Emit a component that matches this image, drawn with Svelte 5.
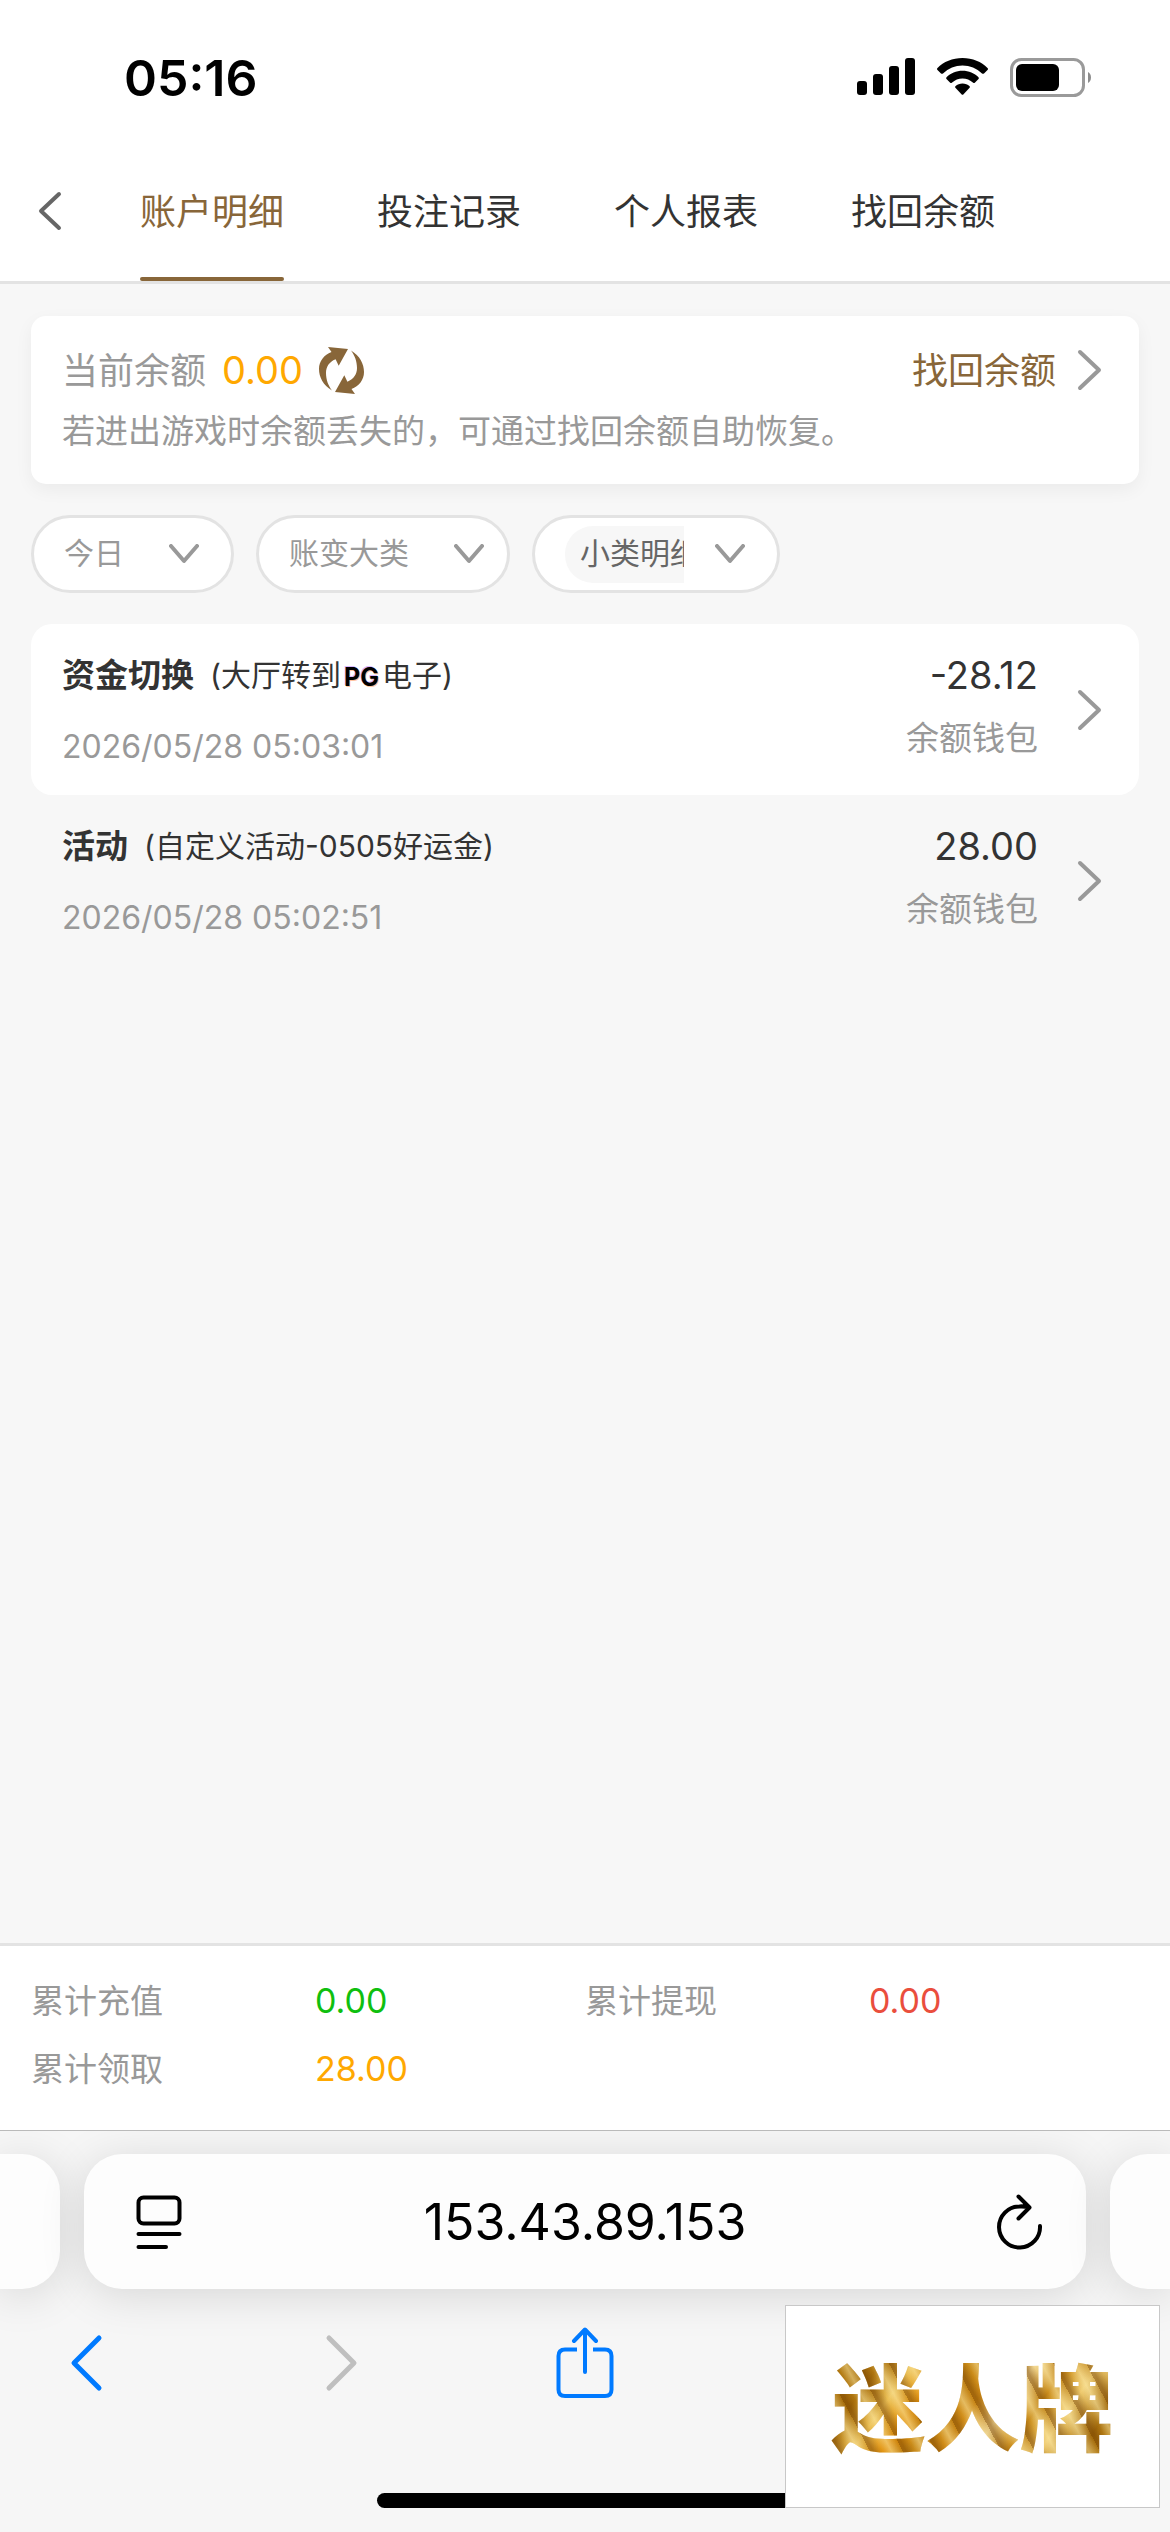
<script lang="ts">
	const tabs = ['账户明细', '投注记录', '个人报表', '找回余额'];
	let activeTab = $state('账户明细');

	const records = [
		{
			type: '资金切换',
			before: '(大厅转到',
			brand: 'PG',
			after: '电子)',
			time: '2026/05/28 05:03:01',
			amount: '-28.12',
			wallet: '余额钱包'
		},
		{
			type: '活动',
			before: '(自定义活动-0505好运金)',
			brand: '',
			after: '',
			time: '2026/05/28 05:02:51',
			amount: '28.00',
			wallet: '余额钱包'
		}
	];

	const totals = [
		{ label: '累计充值', value: '0.00', tone: 'green' },
		{ label: '累计提现', value: '0.00', tone: 'red' },
		{ label: '累计领取', value: '28.00', tone: 'orange' }
	];
</script>

{#snippet arrowRight()}
	<svg class="arrow" width="28" height="42" viewBox="0 0 28 42" aria-hidden="true">
		<path d="M4 3 L23 21 L4 39" />
	</svg>
{/snippet}

{#snippet arrowDown()}
	<svg class="arrow" width="30" height="20" viewBox="0 0 30 20" aria-hidden="true">
		<path d="M2 2 L15 17 L28 2" />
	</svg>
{/snippet}

<div class="screen">
	<div class="status">
		<span class="clock">05:16</span>
		<div class="status-icons">
			<svg width="58" height="38" viewBox="0 0 58 38" aria-hidden="true">
				<rect x="0" y="23" width="10" height="14" rx="3" />
				<rect x="16" y="16" width="10" height="21" rx="3" />
				<rect x="32" y="8" width="10" height="29" rx="3" />
				<rect x="48" y="0" width="10" height="37" rx="3" />
			</svg>
			<svg width="51" height="38" viewBox="0 0 51 38" aria-hidden="true">
				<path d="M25.500 0 C35.500 0 44.500 3.800 50.500 10 Q51.500 11 50.500 12 L47 15.500 Q46 16 45 15.500 C39.500 10.300 33 7.500 25.500 7.500 C18 7.500 11.500 10.300 6 15.500 Q5 16 4 15.500 L0.500 12 Q-0.500 11 0.500 10 C6.500 3.800 15.500 0 25.500 0 Z" />
				<path d="M25.500 12.800 C31.800 12.800 37.500 15.200 41.500 19.300 Q42.300 20.200 41.500 21 L37.800 24.700 Q37 25.200 36.200 24.700 C33 22 29.500 20.500 25.500 20.500 C21.500 20.500 18 22 14.800 24.700 Q14 25.200 13.200 24.700 L9.500 21 Q8.700 20.200 9.500 19.300 C13.500 15.200 19.200 12.800 25.500 12.800 Z" />
				<path d="M25.500 25.500 C28.300 25.500 30.700 26.500 32.600 28.200 Q33.300 29 32.600 29.800 L26.300 36.500 Q25.500 37.200 24.700 36.500 L18.400 29.800 Q17.700 29 18.400 28.200 C20.300 26.500 22.700 25.500 25.500 25.500 Z" />
			</svg>
			<svg width="82" height="39" viewBox="0 0 82 39" aria-hidden="true">
				<rect x="1.500" y="1.500" width="72" height="36" rx="10" fill="none" stroke="#9a9a9a" stroke-width="3" />
				<rect x="6" y="6" width="43" height="27" rx="6" />
				<path d="M78 14 C82 16 82 23 78 25 Z" fill="#8c8c8c" />
			</svg>
		</div>
	</div>

	<header>
		<button class="back" aria-label="返回">
			<svg width="26" height="40" viewBox="0 0 26 40" aria-hidden="true">
				<path d="M23 3 L5 20 L23 37" />
			</svg>
		</button>
		<nav class="tabs">
			{#each tabs as tab}
				<button class:active={tab === activeTab} onclick={() => (activeTab = tab)}>{tab}</button>
			{/each}
		</nav>
	</header>

	<main>
		<section class="balance">
			<div class="balance-row">
				<span class="muted">当前余额</span>
				<span class="money">0.00</span>
				<button class="refresh" aria-label="刷新">
					<svg width="45" height="47" viewBox="0 0 45 47" aria-hidden="true">
						<path id="half" d="M13 43.500 C4 38 0 30 0 22 C0 14 5 8 12.500 5 L9 0 L29 2 L19.700 18.700 L16.600 12.300 C10 15 7 20 7 26 C7 33 9.500 39 13 43.500 Z" />
						<use href="#half" transform="rotate(180 22.500 23.500)" />
					</svg>
				</button>
				<a class="recover" href="#recover">
					<span>找回余额</span>
					{@render arrowRight()}
				</a>
			</div>
			<p>若进出游戏时余额丢失的，可通过找回余额自助恢复。</p>
		</section>

		<div class="filters">
			<div class="pill day">
				<select aria-label="日期"><option>今日</option></select>
				{@render arrowDown()}
			</div>
			<div class="pill kind">
				<select aria-label="账变大类"><option>账变大类</option></select>
				{@render arrowDown()}
			</div>
			<div class="pill detail">
				<select aria-label="小类明细"><option>小类明细</option></select>
				{@render arrowDown()}
			</div>
		</div>

		<ul class="records">
			{#each records as record}
				<li>
					<div class="info">
						<div class="title">
							<strong>{record.type}</strong>
							<span>{record.before}{#if record.brand}<b class="brand">{record.brand}</b>{/if}{record.after}</span>
						</div>
						<time>{record.time}</time>
					</div>
					<div class="sum">
						<span class="amount">{record.amount}</span>
						<span class="wallet">{record.wallet}</span>
					</div>
					{@render arrowRight()}
				</li>
			{/each}
		</ul>
	</main>

	<dl class="totals">
		{#each totals as item}
			<div>
				<dt>{item.label}</dt>
				<dd class={item.tone}>{item.value}</dd>
			</div>
		{/each}
	</dl>

	<footer class="browser">
		<div class="address-row">
			<div class="bar side-left"></div>
			<div class="bar address">
				<button aria-label="页面菜单">
					<svg width="46" height="54" viewBox="0 0 46 54" aria-hidden="true">
						<rect x="2.500" y="2.500" width="41" height="26" rx="5" />
						<path d="M2.500 39 H43.500 M2.500 52 H30" />
					</svg>
				</button>
				<span>153.43.89.153</span>
				<button aria-label="重新载入">
					<svg width="46" height="56" viewBox="0 0 46 56" aria-hidden="true">
						<path d="M43 32 A20.500 20.500 0 1 1 22.500 12.500 Q27 12 32 13.500 M21.500 2.500 L32.500 13.500 L21.500 24.500" />
					</svg>
				</button>
			</div>
			<div class="bar side-right"></div>
		</div>
		<nav class="toolbar">
			<button aria-label="后退">
				<svg width="60" height="72" viewBox="0 0 60 72" aria-hidden="true">
					<path d="M43 11 L18 36 L43 61" stroke-width="5" />
				</svg>
			</button>
			<button aria-label="前进" disabled>
				<svg width="60" height="72" viewBox="0 0 60 72" aria-hidden="true">
					<path d="M23 11 L48 36 L23 61" stroke-width="5" />
				</svg>
			</button>
			<button aria-label="分享">
				<svg width="60" height="72" viewBox="0 0 60 72" aria-hidden="true">
					<path d="M22 22.500 H10 Q3.500 22.500 3.500 29 V62.500 Q3.500 69 10 69 H50 Q56.500 69 56.500 62.500 V29 Q56.500 22.500 50 22.500 H38" stroke-linecap="butt" />
					<path d="M30 45 V3 M19 14 L30 2.500 L41 14" />
				</svg>
			</button>
		</nav>
		<div class="home"></div>
		<div class="sticker"><span>迷人牌</span></div>
	</footer>
</div>

<style>
	:global(body) {
		margin: 0;
		background: #f7f7f7;
	}

	.screen {
		display: flex;
		flex-direction: column;
		min-height: 100vh;
		color: #333;
		font-family: Inter, 'Noto Sans CJK SC', sans-serif;
		font-size: 33px;
	}

	button {
		display: flex;
		align-items: center;
		justify-content: center;
		padding: 0;
		border: 0;
		background: none;
		color: inherit;
		font: inherit;
	}

	svg {
		display: block;
		flex: none;
	}

	/* status bar */
	.status {
		display: flex;
		align-items: flex-start;
		justify-content: space-between;
		height: 141px;
		padding: 48px 78px 0 124px;
		box-sizing: border-box;
		background: #fff;
		color: #000;
	}

	.clock {
		font-size: 50px;
		font-weight: 600;
		line-height: 60px;
	}

	.status-icons {
		display: flex;
		gap: 22px;
		padding-top: 10px;
	}

	/* tabs */
	header {
		display: flex;
		height: 140px;
		border-bottom: 3px solid #e3e3e3;
		background: #fff;
	}

	.back {
		justify-content: flex-start;
		width: 140px;
		padding-left: 36px;
	}

	.back path {
		fill: none;
		stroke: #666;
		stroke-width: 4;
		stroke-linecap: round;
		stroke-linejoin: round;
	}

	.tabs {
		display: flex;
		gap: 93px;
	}

	.tabs button {
		position: relative;
		padding-bottom: 5px;
		font-size: 36px;
		white-space: nowrap;
	}

	.tabs .active {
		color: #886639;
	}

	.tabs .active::after {
		content: '';
		position: absolute;
		right: 0;
		bottom: 0;
		left: 0;
		height: 4px;
		border-radius: 2px;
		background: #886639;
	}

	main {
		flex: 1;
		padding: 32px 31px;
	}

	.arrow path {
		fill: none;
		stroke: #999;
		stroke-width: 4;
		stroke-linecap: round;
		stroke-linejoin: round;
	}

	/* balance card */
	.balance {
		padding: 24px 35px 29px 31px;
		border-radius: 15px;
		background: #fff;
		box-shadow: 0 6px 18px rgba(0, 0, 0, 0.05);
	}

	.balance-row {
		display: flex;
		align-items: center;
		height: 60px;
		font-size: 36px;
	}

	.muted,
	.recover span {
		padding-bottom: 4px;
	}

	.muted {
		color: #999;
	}

	.money {
		margin: 0 16px;
		color: #ffa800;
		font-size: 38px;
	}

	.refresh svg {
		fill: #886639;
	}

	.recover {
		display: flex;
		align-items: center;
		gap: 20px;
		margin-left: auto;
		color: #886639;
		text-decoration: none;
	}

	.balance p {
		margin: 7px 0 0;
		color: #999;
		line-height: 48px;
	}

	/* filters */
	.filters {
		display: flex;
		gap: 22px;
		margin: 31px 0;
	}

	.pill {
		display: flex;
		align-items: center;
		height: 72px;
		padding: 0 32px 0 30px;
		border: 3px solid #e3e3e3;
		border-radius: 39px;
		background: #fff;
	}

	.pill select {
		height: 57px;
		padding: 0 0 2px;
		border: 0;
		background: none;
		appearance: none;
		color: #999;
		font: inherit;
		font-size: 30px;
	}

	.day select {
		width: 105px;
	}

	.kind {
		padding-right: 23px;
	}

	.kind select {
		width: 165px;
	}

	.detail {
		gap: 31px;
	}

	.pill.detail select {
		width: 119px;
		padding-left: 15px;
		border-radius: 28px 0 0 28px;
		background: #f7f7f7;
		color: #666;
	}

	/* records */
	.records {
		margin: 0;
		padding: 0;
		list-style: none;
	}

	.records li {
		display: flex;
		align-items: center;
		height: 171px;
		padding: 0 35px 0 31px;
		border-radius: 21px;
	}

	.records li:nth-child(odd) {
		background: #fff;
	}

	.info,
	.sum {
		display: flex;
		flex-direction: column;
	}

	.info {
		flex: 1;
		gap: 26px;
	}

	.title {
		display: flex;
		align-items: center;
		gap: 16px;
		height: 48px;
	}

	.title span {
		font-size: 30px;
	}

	.brand {
		margin: 0 3px;
		color: #000;
		font-size: 25px;
		font-weight: 700;
		text-shadow:
			-1px -1px #d9b8ff,
			1px 1px #ffc4a0;
	}

	time {
		color: #999;
		font-size: 32px;
		line-height: 48px;
	}

	.sum {
		align-items: flex-end;
		gap: 15px;
		margin-right: 38px;
		padding-bottom: 6px;
	}

	.amount {
		font-size: 38px;
		line-height: 48px;
	}

	.wallet {
		color: #999;
		line-height: 48px;
	}

	/* totals */
	.totals {
		display: grid;
		grid-template-columns: 1fr 1fr;
		row-gap: 20px;
		margin: 0;
		padding: 31px 31px 37px;
		border-top: 3px solid #e3e3e3;
		background: #fff;
		line-height: 48px;
	}

	.totals div {
		display: flex;
	}

	.totals dt {
		width: 284px;
		color: #999;
	}

	.totals dd {
		margin: 0;
		font-size: 34px;
	}

	.green {
		color: #0fbf0f;
	}

	.red {
		color: #ea4e3d;
	}

	.orange {
		color: #ffa800;
	}

	/* browser chrome */
	.browser {
		position: relative;
		overflow: hidden;
		padding: 23px 0 24px;
		border-top: 1px solid #bababa;
		background: #f6f6f6;
	}

	.address-row {
		display: flex;
		gap: 24px;
		height: 135px;
	}

	.bar {
		background: #fdfdfd;
		box-shadow: 0 6px 45px rgba(0, 0, 0, 0.13);
	}

	.side-left {
		width: 60px;
		border-radius: 0 38px 38px 0;
	}

	.side-right {
		width: 60px;
		border-radius: 38px 0 0 38px;
	}

	.address {
		display: flex;
		flex: 1;
		align-items: center;
		justify-content: space-between;
		padding: 0 43px 0 52px;
		border-radius: 38px;
		color: #000;
		font-size: 50px;
	}

	.address span {
		padding-right: 9px;
	}

	.address svg {
		fill: none;
		stroke: #000;
		stroke-width: 4;
		stroke-linecap: round;
		stroke-linejoin: round;
	}

	.toolbar {
		display: flex;
		align-items: center;
		justify-content: space-between;
		width: calc(50% + 50px);
		height: 148px;
		padding-left: 36px;
		box-sizing: border-box;
		color: #007aff;
	}

	.toolbar button {
		width: 100px;
		height: 100px;
	}

	.toolbar button:disabled {
		color: #bfbfbf;
	}

	.toolbar svg {
		fill: none;
		stroke: currentColor;
		stroke-width: 4;
		stroke-linecap: round;
		stroke-linejoin: round;
	}

	.home {
		width: 416px;
		height: 15px;
		margin: 56px auto 0;
		border-radius: 8px;
		background: #000;
	}

	/* floats over the toolbar */
	.sticker {
		position: absolute;
		right: 10px;
		bottom: 24px;
		display: flex;
		align-items: center;
		justify-content: center;
		width: 373px;
		height: 201px;
		border: 1px solid #c8c8c8;
		background: #fff;
	}

	.sticker span {
		padding: 0 12px 8px;
		background:
			repeating-linear-gradient(
				62deg,
				rgba(120, 66, 0, 0.5) 0 3px,
				rgba(230, 160, 40, 0.1) 11px,
				rgba(255, 236, 170, 0.5) 19px,
				rgba(160, 96, 4, 0.2) 29px
			),
			linear-gradient(
				125deg,
				#b07a14 8%,
				#a8700c 20%,
				#ecc45c 28%,
				#e0900c 36%,
				#c48818 42%,
				#d08c18 50%,
				#f5dfa0 58%,
				#c88c1c 66%,
				#f0d078 74%,
				#a06a0c 84%,
				#c89020 94%
			);
		background-clip: text;
		color: transparent;
		font-size: 94px;
		font-style: oblique 8deg;
		font-weight: 900;
	}
</style>
